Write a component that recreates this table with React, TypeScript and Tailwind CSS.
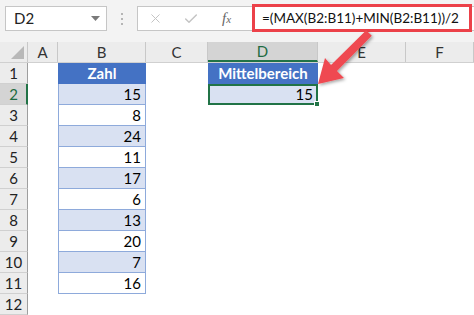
import { X, Check } from "lucide-react";

const cols = [
  { key: "A", w: "w-[30px]" },
  { key: "B", w: "w-[88px]" },
  { key: "C", w: "w-[62px]" },
  { key: "D", w: "w-[110px]" },
  { key: "E", w: "w-[88px]" },
  { key: "F", w: "flex-1" },
];

const zahlen = [15, 8, 24, 11, 17, 6, 13, 20, 7, 16];

function NameBox() {
  return (
    <div className="ml-[5px] mt-[6px] flex h-[25px] w-[102px] items-center justify-between border border-[#c6c6c6] bg-white pl-[8px] pr-[6px]">
      <span className="text-[15px] text-[#222]">D2</span>
      <svg width="9" height="5" viewBox="0 0 9 5">
        <path d="M0 0 L9 0 L4.5 5 Z" fill="#7a7a7a" />
      </svg>
    </div>
  );
}

function FormulaBar() {
  return (
    <div className="mt-[6px] flex h-[25px] flex-1 items-center border border-r-0 border-[#c6c6c6] bg-white">
      <div className="flex w-[114px] shrink-0 items-center">
        <X className="ml-[10px] h-[15px] w-[15px] text-[#c4c4c4]" strokeWidth={1.6} />
        <Check className="ml-[20px] h-[16px] w-[16px] text-[#c4c4c4]" strokeWidth={2.2} />
        <span className="ml-[23px] font-['Liberation_Serif',serif] text-[15px] italic text-[#666]">
          f<span className="text-[11px]">x</span>
        </span>
      </div>
      <div className="-mt-[1px] mr-[2px] flex h-[28px] min-w-0 flex-1 items-center overflow-hidden border-[3px] border-[#ec4149] bg-white pl-[7px]">
        <span className="whitespace-nowrap text-[13.5px] text-[#111]">=(MAX(B2:B11)+MIN(B2:B11))/2</span>
      </div>
    </div>
  );
}

function ColumnHeaders() {
  return (
    <div className="flex h-[21px] border-b border-[#d0d0d0] bg-[#ececec]">
      <div className="relative w-[28px] border-r border-[#c8c8c8]">
        <svg className="absolute bottom-[3px] right-[3px]" width="13" height="13" viewBox="0 0 13 13">
          <path d="M13 0 L13 13 L0 13 Z" fill="#b8b8b8" />
        </svg>
      </div>
      {cols.map((c) => (
        <div
          key={c.key}
          className={
            c.key === "D"
              ? `${c.w} flex items-center justify-center border-r border-b-2 border-[#c8c8c8] border-b-[#217346] bg-[#d4d4d4] text-[15px] text-[#1e6b41]`
              : `${c.w} flex items-center justify-center border-r border-[#c8c8c8] text-[15px] text-[#333]`
          }
        >
          {c.key}
        </div>
      ))}
    </div>
  );
}

function RowHeader({ n }: { n: number }) {
  const active = n === 2;
  return (
    <div
      className={
        active
          ? "flex w-[28px] items-center justify-center border-b border-r-2 border-[#d0d0d0] border-r-[#217346] bg-[#d4d4d4] pl-[1px] text-[15px] text-[#1e6b41]"
          : "flex w-[28px] items-center justify-center border-b border-r border-[#d0d0d0] border-r-[#9e9e9e] bg-[#ececec] text-[15px] text-[#222]"
      }
    >
      {n}
    </div>
  );
}

function BCell({ row }: { row: number }) {
  if (row === 1) {
    return (
      <div className="flex w-[88px] items-center justify-center bg-[#4472c4] text-[15px] font-bold text-white">
        Zahl
      </div>
    );
  }
  if (row > 11) return <div className="w-[88px]" />;
  const stripe = row % 2 === 0 ? "bg-[#d9e1f2]" : "bg-white";
  return (
    <div
      className={`flex w-[88px] items-center justify-end border-x border-b border-[#8eaadb] pr-[4px] text-[15px] text-black ${stripe}`}
    >
      {zahlen[row - 2]}
    </div>
  );
}

function DCell({ row }: { row: number }) {
  if (row === 1) {
    return (
      <div className="flex w-[110px] items-center justify-center bg-[#4472c4] text-[15px] font-bold text-white">
        Mittelbereich
      </div>
    );
  }
  if (row === 2) {
    return (
      <div className="relative flex w-[110px] items-center justify-end border-2 border-[#217346] bg-[#d9e1f2] pr-[3px] text-[15px] text-black">
        15
        <div className="absolute -bottom-[4px] -right-[4px] h-[6px] w-[6px] border border-white bg-[#217346]" />
      </div>
    );
  }
  return <div className="w-[110px]" />;
}

function Row({ n }: { n: number }) {
  return (
    <div className="flex h-[21px]">
      <RowHeader n={n} />
      <div className="w-[30px]" />
      <BCell row={n} />
      <div className="w-[62px]" />
      <DCell row={n} />
      <div className="w-[88px]" />
      <div className="flex-1" />
    </div>
  );
}

export default function App() {
  const rows = Array.from({ length: 12 }, (_, i) => i + 1);
  return (
    <div className="relative h-[315px] w-[474px] overflow-hidden bg-white font-['Lato',sans-serif]">
      <div className="flex h-[42px] items-start bg-[#f3f3f3]">
        <NameBox />
        <div className="mt-[13px] flex w-[30px] shrink-0 flex-col items-center gap-[3px]">
          <span className="h-[2px] w-[2px] bg-[#b5b5b5]" />
          <span className="h-[2px] w-[2px] bg-[#b5b5b5]" />
          <span className="h-[2px] w-[2px] bg-[#b5b5b5]" />
        </div>
        <FormulaBar />
      </div>
      <ColumnHeaders />
      {rows.map((n) => (
        <Row key={n} n={n} />
      ))}
      {/* pointer from the formula to the result cell */}
      <svg
        className="pointer-events-none absolute left-0 top-0"
        width="474"
        height="315"
        viewBox="0 0 474 315"
      >
        <defs>
          <filter id="arrowShadow" x="-20%" y="-20%" width="140%" height="140%">
            <feDropShadow dx="1.5" dy="1.5" stdDeviation="1.5" floodColor="#000" floodOpacity="0.35" />
          </filter>
        </defs>
        <polygon
          points="318,84 344,78 337,71 371.8,35.8 366.2,30.2 331,65 325,58"
          fill="#ef4a51"
          filter="url(#arrowShadow)"
        />
      </svg>
    </div>
  );
}
